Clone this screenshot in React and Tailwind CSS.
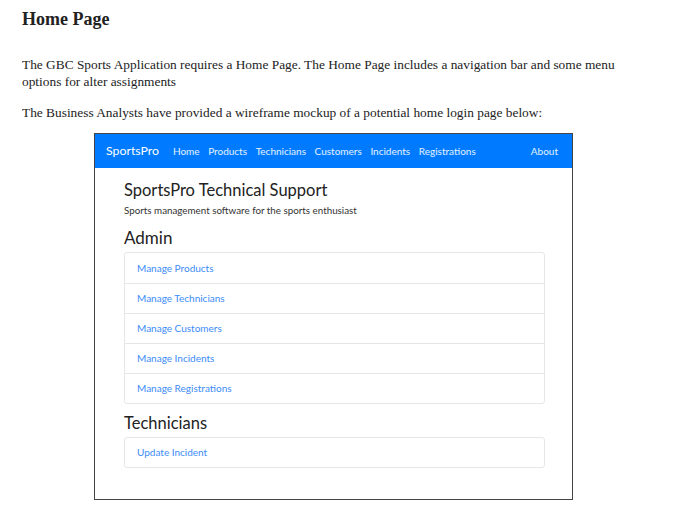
export default function App() {
    const admin = ["Manage Products", "Manage Technicians", "Manage Customers", "Manage Incidents", "Manage Registrations"];
    const nav = ["Home", "Products", "Technicians", "Customers", "Incidents", "Registrations"];

    return (
        <div className="w-[673px] h-[529px] bg-white pl-[22px] pt-[7px] font-['Liberation_Serif',serif] text-[#222]">
            <h1 className="text-[18px] leading-[24px] font-bold">Home Page</h1>
            <p className="mt-[25px] text-[13.36px] leading-[17px] w-[610px]">
                The GBC Sports Application requires a Home Page. The Home Page includes a navigation bar and some menu options for alter assignments
            </p>
            <p className="mt-[14px] text-[13.36px] leading-[17px]">
                The Business Analysts have provided a wireframe mockup of a potential home login page below:
            </p>

            <div className="mt-[12px] ml-[72px] w-[479px] h-[367px] border border-[#444] font-['Lato',sans-serif]">
                <div className="h-[34px] bg-[#007bff] flex items-center px-[11px] text-white">
                    <span className="text-[12.3px] mr-[14px]">SportsPro</span>
                    <div className="flex gap-[8.6px] text-[10px] text-white/90">
                        {nav.map((n) => (
                            <span key={n}>{n}</span>
                        ))}
                    </div>
                    <span className="ml-auto text-[10px] text-white/90 mr-[3px]">About</span>
                </div>

                <div className="pl-[29px] pr-[27px]">
                    <h2 className="mt-[11px] text-[16.5px] leading-[22px] text-[#222]">SportsPro Technical Support</h2>
                    <p className="mt-[1px] text-[9.8px] leading-[16px] text-[#333]">Sports management software for the sports enthusiast</p>
                    <h3 className="mt-[9px] text-[17px] leading-[22px] text-[#222]">Admin</h3>
                    <div className="mt-[3px] border border-[#e6e6e6] rounded-[3px]">
                        {admin.map((a, i) => (
                            <div key={a} className={`h-[30px] flex items-center px-[12px] text-[10px] text-[#3b8cf8] ${i > 0 ? "border-t border-[#e6e6e6]" : ""}`}>
                                {a}
                            </div>
                        ))}
                    </div>
                    <h3 className="mt-[8px] text-[16.5px] leading-[22px] text-[#222]">Technicians</h3>
                    <div className="mt-[3px] border border-[#e6e6e6] rounded-[3px]">
                        <div className="h-[29px] flex items-center px-[12px] text-[10px] text-[#3b8cf8]">Update Incident</div>
                    </div>
                </div>
            </div>
        </div>
    );
}
